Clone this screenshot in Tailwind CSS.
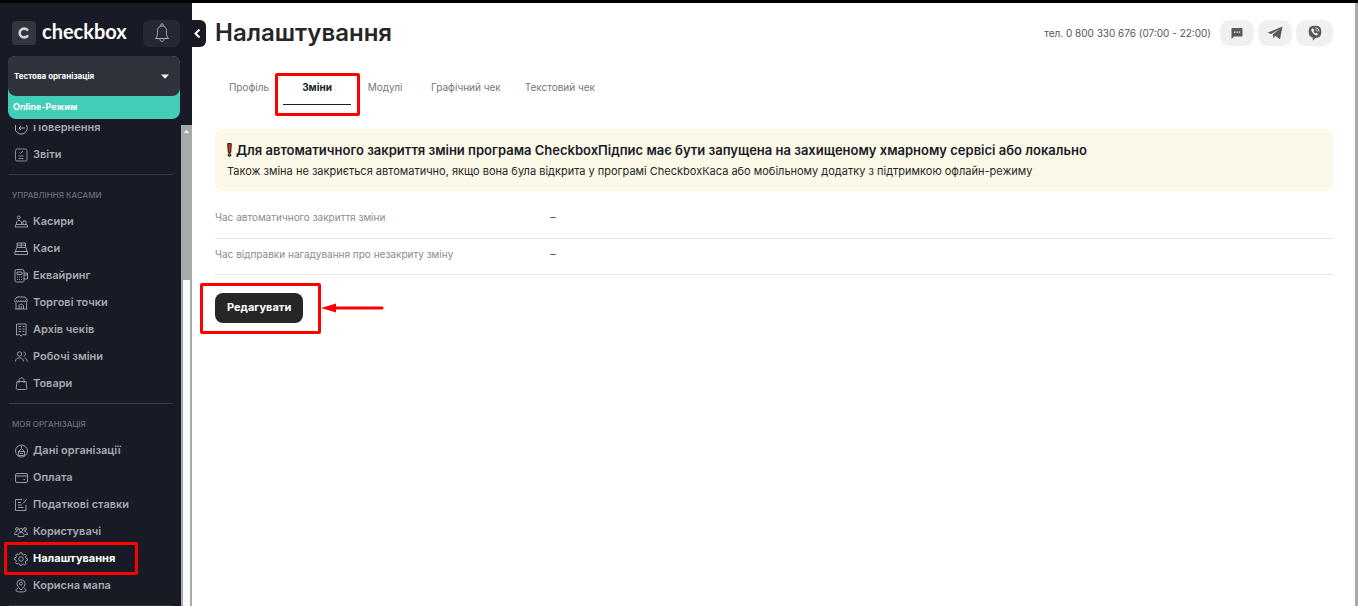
<!DOCTYPE html>
<html lang="uk">
<head>
    <meta charset="UTF-8">
    <meta name="viewport" content="width=device-width, initial-scale=1.0">
    <title>Налаштування - checkbox</title>
    <script src="https://cdn.jsdelivr.net/npm/@tailwindcss/browser@4"></script>
</head>
<body class="flex flex-col h-screen overflow-hidden bg-white border-t-3 border-black font-[Inter,sans-serif] text-[#262626]">
    <div class="flex flex-1 min-h-0">
        <aside class="relative flex flex-col w-48 shrink-0 bg-[#181b26]">
            <div class="flex items-center px-3 pt-4">
                <a href="#" class="flex items-center gap-1.5">
                    <svg class="w-6 h-6" viewBox="0 0 24 24" fill="none">
                        <rect width="24" height="24" rx="4" fill="#33363f"/>
                        <path d="M16 9.6C15.2 8.3 13.8 7.6 12.200 7.600C9.600 7.600 7.700 9.400 7.700 12C7.700 14.600 9.600 16.400 12.200 16.400C13.800 16.400 15.200 15.700 16 14.400" stroke="#d2d2d4" stroke-width="2.600"/>
                    </svg>
                    <span class="pb-1 font-[Lato,sans-serif] font-bold text-[20px] leading-6 text-white">checkbox</span>
                </a>
                <button type="button" aria-label="Сповіщення" class="flex items-center justify-center ml-auto w-[37px] h-[27px] rounded-md bg-[#242933]">
                    <svg class="w-4 h-5" viewBox="0 0 16 20" fill="none" stroke="#a9a9c2" stroke-linejoin="round">
                        <path d="M6.600 3V2.200a1.400 1.400 0 0 1 2.800 0V3M1.500 15.500C3 14 3.500 12.500 3.500 9.500V7.500C3.500 4.800 5.500 3 8 3s4.500 1.800 4.500 4.500v2c0 3 .5 4.500 2 6zM6 15.500v1c0 1 .8 1.800 2 1.800s2-.8 2-1.800v-1"/>
                    </svg>
                </button>
            </div>

            <div class="mx-2 mr-3 mt-[9px] rounded-lg bg-[#42cdb6]">
                <div class="relative rounded-lg bg-[#2f323b]">
                    <select aria-label="Організація" class="appearance-none block w-full h-10 pl-1.5 pr-6 bg-transparent text-white text-[8px] font-bold outline-none">
                        <option>Тестова організація</option>
                    </select>
                    <svg class="absolute right-[11px] top-[18px] w-2 h-[5px] pointer-events-none" viewBox="0 0 8 5" fill="#fff"><path d="M0 .5h8L4 4.800z"/></svg>
                </div>
                <p class="px-[5px] pt-[5px] pb-1.5 text-white text-[9px] leading-3 font-bold">Online-Режим</p>
            </div>

            <div class="flex flex-1 min-h-0 mt-1.5">
                <nav class="flex-1 overflow-hidden text-[11px] font-semibold text-[#a6a8ac]">
                    <ul class="-mt-[11px] px-2">
                        <li><a href="#" class="flex items-center gap-[5px] h-[27px] pl-1.5">
                            <svg class="w-3.5 h-3.5" viewBox="0 0 14 14" fill="none" stroke="currentColor"><path d="M4 2a6 6 0 1 1-2 8M1.500 4v6M11 7H5M7 5L5 7l2 2"/></svg>
                            Повернення</a></li>
                        <li><a href="#" class="flex items-center gap-[5px] h-[27px] pl-1.5">
                            <svg class="w-3.5 h-3.5" viewBox="0 0 14 14" fill="none" stroke="currentColor" stroke-width=".8"><rect x="1.500" y="1" width="11.500" height="12" rx="1.500"/><path d="M5.500 4.500l1 1 2.500-2.500M4.500 8h5M4.500 10.500h5"/></svg>
                            Звіти</a></li>
                    </ul>
                    <div class="mt-1.5 ml-[9px] mr-2 h-px bg-[#363941]"></div>
                    <h2 class="pt-2 pl-3 text-[8px] leading-[25px] font-medium text-[#6c6f77]">УПРАВЛІННЯ КАСАМИ</h2>
                    <ul class="px-2">
                        <li><a href="#" class="flex items-center gap-[5px] h-[27px] pl-1.5">
                            <svg class="w-3.5 h-3.5" viewBox="0 0 14 14" fill="none" stroke="currentColor" stroke-width=".9"><circle cx="4.800" cy="2.500" r="1.500"/><path d="M2.500 9.500V7L4 5.500h2L7.500 7v2.500M9 9.500V6h3v3.500M1.800 9.500h11.200l.7 2.500H1z"/></svg>
                            Касири</a></li>
                        <li><a href="#" class="flex items-center gap-[5px] h-[27px] pl-1.5">
                            <svg class="w-3.5 h-3.5" viewBox="0 0 14 14" fill="none" stroke="currentColor" stroke-width=".9"><path d="M3 1h8.500v4.500H3zM3 3.200h8.500M7.200 1v4.500M2.700 5.500L1.500 9.500h11.500l-1-4M1 9.500h12.500v3H1z"/></svg>
                            Каси</a></li>
                        <li><a href="#" class="flex items-center gap-[5px] h-[27px] pl-1.5">
                            <svg class="w-3.5 h-3.5" viewBox="0 0 14 14" fill="none" stroke="currentColor" stroke-width=".9"><rect x="1" y=".5" width="9" height="12.500" rx="1.500"/><path d="M3 3h5v2.500H3zM10 4h3.500v6H10M10 6h3M3 8h1M5 8h1M7 8h1M3 10.500h1M5 10.500h1M7 10.500h1"/></svg>
                            Еквайринг</a></li>
                        <li><a href="#" class="flex items-center gap-[5px] h-[27px] pl-1.5">
                            <svg class="w-3.5 h-3.5" viewBox="0 0 14 14" fill="none" stroke="currentColor" stroke-width=".9"><path d="M3 1h8l2.500 3.500c0 1.700-2 1.700-2.200 0 0 1.700-2 1.700-2.200 0 0 1.700-2 1.700-2.200 0 0 1.700-2 1.700-2.200 0 0 1.700-2 1.700-2.200 0 0 1.700-2 1.700-2.200 0zM2 6.500v6.500M12.500 6.500v6.500M1 13h12.500M5 13V9.500L7.200 8l2.300 1.500V13M7.200 10v3"/></svg>
                            Торгові точки</a></li>
                        <li><a href="#" class="flex items-center gap-[5px] h-[27px] pl-1.5">
                            <svg class="w-3.5 h-3.5" viewBox="0 0 14 14" fill="none" stroke="currentColor" stroke-width=".9"><path d="M2.500 1h9.500v11l-3-.5L7.200 13l-1.700-1.500-3 .5zM4.500 3.500h2.500M4.500 6h2.500M4.500 8.500h2.500M8.500 3.500h2M8.500 6h2M8.500 8.500h2"/></svg>
                            Архів чеків</a></li>
                        <li><a href="#" class="flex items-center gap-[5px] h-[27px] pl-1.5">
                            <svg class="w-3.5 h-3.5" viewBox="0 0 14 14" fill="none" stroke="currentColor" stroke-width=".9"><circle cx="5.500" cy="4" r="2.200"/><path d="M1.500 11.500c0-2.500 1.800-3.700 4-3.700s4 1.200 4 3.700M9.500 2c2.700.2 2.700 3.800 0 4.200M10.500 8c1.800.3 2.700 1.500 2.700 3.500"/></svg>
                            Робочі зміни</a></li>
                        <li><a href="#" class="flex items-center gap-[5px] h-[27px] pl-1.5">
                            <svg class="w-3.5 h-3.5" viewBox="0 0 14 14" fill="none" stroke="currentColor" stroke-width=".9"><path d="M3 4.500h9l.8 6.500c0 1-.5 1.500-1.300 1.500h-8c-.8 0-1.300-.5-1.300-1.500zM5 6V3.500c0-3.500 5-3.500 5 0V6"/></svg>
                            Товари</a></li>
                    </ul>
                    <div class="mt-1.5 ml-[9px] mr-2 h-px bg-[#363941]"></div>
                    <h2 class="pt-2 pl-3 text-[8px] leading-[25px] font-medium text-[#6c6f77]">МОЯ ОРГАНІЗАЦІЯ</h2>
                    <ul class="px-2">
                        <li><a href="#" class="flex items-center gap-[5px] h-[27px] pl-1.5">
                            <svg class="w-3.5 h-3.5" viewBox="0 0 14 14" fill="none" stroke="currentColor" stroke-width=".9"><circle cx="7.500" cy="7" r="6"/><path d="M7.500 2v2M4.500 11.500V7.500l3-3 3 3v4M4.500 7.500h6M6 9.500h3M4.500 11.500h6"/></svg>
                            Дані організації</a></li>
                        <li><a href="#" class="flex items-center gap-[5px] h-[27px] pl-1.5">
                            <svg class="w-3.5 h-3.5" viewBox="0 0 14 14" fill="none" stroke="currentColor" stroke-width=".9"><rect x="1.500" y="2.500" width="12" height="9" rx="1.500"/><path d="M1.500 5h12M9.500 8.500h1.500"/></svg>
                            Оплата</a></li>
                        <li><a href="#" class="flex items-center gap-[5px] h-[27px] pl-1.5">
                            <svg class="w-3.5 h-3.5" viewBox="0 0 14 14" fill="none" stroke="currentColor" stroke-width=".9"><path d="M8 1.500H1.500v11h10.500V7M4 4.500h3M4 7h4M4 9.500h5.500M9 5.500l3.500-4M9.500 2h.5M12 5h.5"/></svg>
                            Податкові ставки</a></li>
                        <li><a href="#" class="flex items-center gap-[5px] h-[27px] pl-1.5">
                            <svg class="w-3.5 h-3.5" viewBox="0 0 14 14" fill="none" stroke="currentColor" stroke-width=".9"><circle cx="7" cy="5" r="1.700"/><circle cx="3" cy="4" r="1.400"/><circle cx="11" cy="4" r="1.400"/><path d="M4 11.500V9.500C4.300 8 5.500 7.500 7 7.500s2.700.5 3 2v2zM3.500 6.500C1.500 6.500.5 7.500.5 9.500H3M10.500 6.500c2 0 3 1 3 3H11"/></svg>
                            Користувачі</a></li>
                        <li class="relative"><a href="#" aria-current="page" class="flex items-center gap-[5px] h-[27px] pl-1.5 font-bold text-white">
                            <svg class="w-3.5 h-3.5 text-[#a6a8ac]" viewBox="0 0 14 14" fill="none" stroke="currentColor" stroke-width=".9"><circle cx="7" cy="7" r="2.300"/><path d="M6 .8h2l.4 1.700 1.100.5 1.500-.9 1.300 1.400-.8 1.500.4 1.100 1.500.5v1.800l-1.600.5-.5 1.100.8 1.500-1.400 1.300-1.500-.8-1 .4L7.800 13.300H6l-.5-1.500-1.100-.5-1.500.8-1.300-1.400.8-1.500L1.900 8 .6 7.600V5.900l1.500-.5.4-1-.8-1.500L3 1.800l1.500.8L5.500 2.200z"/></svg>
                            Налаштування</a>
                            <span class="absolute -left-1 -top-[3px] w-[134px] h-[33px] border-3 border-[#ff0000] rounded-xs pointer-events-none"></span>
                        </li>
                        <li><a href="#" class="flex items-center gap-[5px] h-[27px] pl-1.5">
                            <svg class="w-3.5 h-3.5" viewBox="0 0 14 14" fill="none" stroke="currentColor" stroke-width=".9"><circle cx="7" cy="4.500" r="1.500"/><path d="M7 11C4.500 8.500 3 6.500 3 4.700 3 2.300 4.800.8 7 .8s4 1.500 4 3.900C11 6.500 9.500 8.500 7 11zM4 9.500C.5 10.500 1 13 7 13s6.500-2.500 3-3.500"/></svg>
                            Корисна мапа</a></li>
                    </ul>
                    <div class="mt-1.5 ml-[9px] mr-2 h-px bg-[#363941]"></div>
                </nav>
                <!-- scrollbar -->
                <div class="w-[11px] flex flex-col bg-[#a9a9a9]">
                    <div class="h-[155px] pt-[5px] flex justify-center items-start">
                        <svg class="w-[5px] h-[3px]" viewBox="0 0 5 3" fill="#fff"><path d="M2.500 0L5 3H0z"/></svg>
                    </div>
                    <div class="flex-1 mx-0.5 bg-[#f9f9f9]"></div>
                </div>
            </div>

            <button type="button" aria-label="Згорнути меню" class="absolute left-full top-[17px] flex items-center w-3.5 h-[27px] rounded-r-md bg-[#181b26] pl-0.5">
                <svg class="w-[7px] h-[9px]" viewBox="0 0 7 9" fill="none" stroke="#fff" stroke-width="2"><path d="M5.500.5l-4 4 4 4"/></svg>
            </button>
        </aside>

        <main class="flex-1 min-w-0 pl-[23px] pr-[22px] border-r-3 border-[#a9a9a9]">
            <header class="flex items-center pt-4">
                <h1 class="text-[24px] leading-7 font-semibold">Налаштування</h1>
                <div class="flex items-center gap-1 ml-auto">
                    <a href="tel:0800330676" class="mr-[5px] text-[10px] text-[#555]">тел. 0 800 330 676 (07:00 - 22:00)</a>
                    <button type="button" aria-label="Чат" class="flex items-center justify-center w-[34px] h-[26px] rounded-[10px] bg-[#eff0f2]">
                        <svg class="w-3 h-3" viewBox="0 0 12 12"><path d="M1.500 1h9c.6 0 1 .4 1 1v6.500c0 .6-.4 1-1 1H3L.5 12V2c0-.6.4-1 1-1z" fill="#5a5a5a"/><path d="M3 5.200h1.300M5.400 5.200h1.300M7.800 5.200h1.300" stroke="#fff" stroke-width="1.200"/></svg>
                    </button>
                    <button type="button" aria-label="Telegram" class="flex items-center justify-center w-[34px] h-[26px] rounded-[10px] bg-[#eff0f2]">
                        <svg class="w-4 h-3.5" viewBox="0 0 16 14" fill="#5a5a5a"><path d="M15.500.5L13 13.200 8.200 9.800 6.500 12.500 5.800 8.500 12.500 3 4.300 8 .5 6.700z"/></svg>
                    </button>
                    <button type="button" aria-label="Viber" class="flex items-center justify-center w-[37px] h-[26px] rounded-[10px] bg-[#eff0f2]">
                        <svg class="w-3.5 h-4" viewBox="0 0 14 16" fill="none"><path d="M7 .8c4.500 0 6.300 1.500 6.300 6s-1.800 6-5.500 6.200L4.700 15.600V12.600C1.800 12 .7 10 .7 6.800c0-4.500 1.800-6 6.300-6z" fill="#5a5a5a"/><path d="M4.200 3.500c-1.300.8-.9 2 0 3.500s2 2.500 3.800 3.300c1 .3 1.700-.5 2-1.200L8.300 7.800l-.9.700C6.500 8 5.900 7.300 5.500 6.400l.7-.8L5 3.500z" fill="#fff"/><path d="M7.300 2.900c2.300 0 3.700 1.300 3.700 3.700M7.500 4.700c1.100 0 1.700.6 1.700 1.700" stroke="#fff" stroke-width=".8"/></svg>
                    </button>
                </div>
            </header>

            <nav class="flex mt-[23px] text-[10px] leading-[14px] text-[#777]">
                <a href="#" class="min-w-[68px] px-3 py-2.5 text-center">Профіль</a>
                <div class="relative min-w-[68px]">
                    <a href="#" aria-current="page" class="block px-3 py-2.5 text-center font-bold text-[#1c1f29] border-b border-[#1c1f29]">Зміни</a>
                    <span class="absolute -left-2 -right-[9px] top-[3px] h-[43px] border-3 border-[#ff0000] rounded-xs pointer-events-none"></span>
                </div>
                <a href="#" class="min-w-[68px] px-3 py-2.5 text-center">Модулі</a>
                <a href="#" class="px-3 py-2.5 text-center">Графічний чек</a>
                <a href="#" class="px-3 py-2.5 text-center">Текстовий чек</a>
            </nav>

            <section class="mt-6 p-3 rounded-lg bg-[#fdf9e9]">
                <p class="flex items-center gap-1 text-[13px] leading-[18px] font-semibold text-[#181b26]">
                    <svg class="w-[5px] h-3.5" viewBox="0 0 5 14" stroke="#1b1b1b" fill="#d83a17"><path d="M.7.6h3.600L3.700 9.400H1.300z"/><circle cx="2.500" cy="12" r="1.400"/></svg>
                    Для автоматичного закриття зміни програма CheckboxПідпис має бути запущена на захищеному хмарному сервісі або локально</p>
                <p class="mt-1 text-[11px] leading-4 text-[#262626]">Також зміна не закриється автоматично, якщо вона була відкрита у програмі CheckboxКаса або мобільному додатку з підтримкою офлайн-режиму</p>
            </section>

            <table class="w-full mt-[11px] text-[10px] leading-[15px]">
                <tbody>
                    <tr class="h-9 border-b border-[#e5e5e5]">
                        <th scope="row" class="w-[30%] pb-1 text-left font-normal text-[#8c8c8c]">Час автоматичного закриття зміни</th>
                        <td class="pb-1">–</td>
                    </tr>
                    <tr class="h-9 border-b border-[#e5e5e5]">
                        <th scope="row" class="w-[30%] pb-1 text-left font-normal text-[#8c8c8c]">Час відправки нагадування про незакриту зміну</th>
                        <td class="pb-1">–</td>
                    </tr>
                </tbody>
            </table>

            <div class="relative inline-block mt-[18px]">
                <button type="button" class="block h-[30px] px-3 rounded-lg bg-[#262626] text-white text-[11px] font-bold">Редагувати</button>
                <span class="absolute -left-[15px] -right-[18px] -top-2.5 -bottom-[11px] border-3 border-[#ff0000] rounded-xs pointer-events-none"></span>
                <svg class="absolute left-full top-2.5 ml-[18px] w-[63px] h-2.5" viewBox="0 0 63 10"><path d="M14 5h47" stroke="#f00" stroke-width="3" stroke-linecap="round"/><path d="M0 5l15-4.500v9z" fill="#f00"/></svg>
            </div>
        </main>
    </div>
</body>
</html>
